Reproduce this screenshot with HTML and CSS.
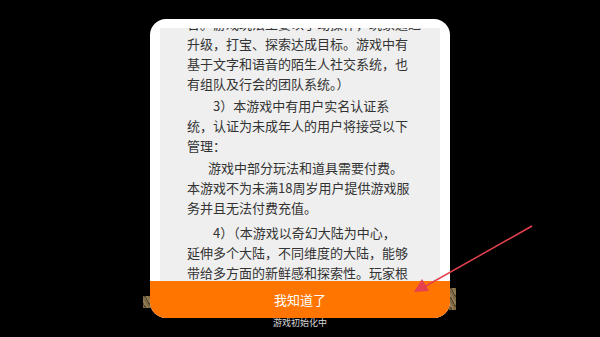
FILE: index.html
```html
<!DOCTYPE html>
<html lang="zh-CN">
<head>
    <meta charset="UTF-8">
    <meta name="viewport" content="width=device-width, initial-scale=1.0">
    <title>用户协议</title>
    <link rel="stylesheet" href="styles.css">
</head>
<body>
    <div class="game">
        <div class="tile tile-left"></div>
        <div class="tile tile-right"></div>
        <div class="loading">游戏初始化中</div>
    </div>

    <div class="overlay">
        <div class="dialog">
            <div class="content">
                <div class="text">
                    <p>合。游戏玩法主要以手动操作，玩家通过<br>升级，打宝、探索达成目标。游戏中有<br>基于文字和语音的陌生人社交系统，也<br>有组队及行会的团队系统。）</p>
                    <p class="indent">3）本游戏中有用户实名认证系<br>统，认证为未成年人的用户将接受以下<br>管理：</p>
                    <p class="sub">游戏中部分玩法和道具需要付费。<br>本游戏不为未满18周岁用户提供游戏服<br>务并且无法付费充值。</p>
                    <p class="indent last">4）（本游戏以奇幻大陆为中心，<br>延伸多个大陆，不同维度的大陆，能够<br>带给多方面的新鲜感和探索性。玩家根<br>据自己的喜好选择职业进行游戏。）</p>
                </div>
            </div>
            <button class="ok">我知道了</button>
        </div>
    </div>

    <svg class="arrow" width="600" height="337" viewBox="0 0 600 337">
        <line x1="532" y1="226" x2="424" y2="287" stroke="#e5404e" stroke-width="1.5"/>
        <polygon points="414,292 422,279 429,291" fill="#e5404e"/>
    </svg>
</body>
</html>
```

FILE: styles.css
```css
body {
    margin: 0;
    width: 600px;
    height: 337px;
    background-color: #000;
    font-family: "Noto Sans CJK SC", "Noto Sans", sans-serif;
    overflow: hidden;
    position: relative;
}
.game {
    position: absolute;
    inset: 0;
}
.tile {
    position: absolute;
    background: repeating-linear-gradient(60deg, #7d6a45 0 2px, #52442a 2px 3px, #8f7a52 3px 5px);
}
.tile-left {
    left: 143px;
    top: 296px;
    width: 8px;
    height: 12px;
}
.tile-right {
    left: 449px;
    top: 288px;
    width: 7px;
    height: 22px;
}
.loading {
    position: absolute;
    left: 0;
    right: 0;
    top: 316px;
    text-align: center;
    color: #d8d8d8;
    font-size: 9px;
    line-height: 14px;
}
.overlay {
    position: absolute;
    inset: 0;
    display: flex;
    align-items: center;
    justify-content: center;
}
.dialog {
    width: 300px;
    height: 299px;
    background-color: #fff;
    border-radius: 16px;
    overflow: hidden;
    display: flex;
    flex-direction: column;
}
.content {
    margin: 9px 10px 0;
    flex: 1;
    background-color: #efefef;
    overflow: hidden;
}
.text {
    margin-top: -14px;
    padding-left: 27px;
    color: #333;
    font-size: 13px;
    line-height: 20px;
    white-space: nowrap;
}
.text p {
    margin: 0 0 1.5px;
}
.text p.indent {
    text-indent: 26px;
}
.text p.sub {
    text-indent: 21px;
    margin-top: 2px;
}
.text p.last {
    margin-top: 5px;
}
.ok {
    height: 37px;
    border: none;
    background-color: #ff7500;
    color: #fff;
    font-family: inherit;
    font-size: 13px;
    padding: 0;
    outline: none;
}
.arrow {
    position: absolute;
    left: 0;
    top: 0;
}
```
